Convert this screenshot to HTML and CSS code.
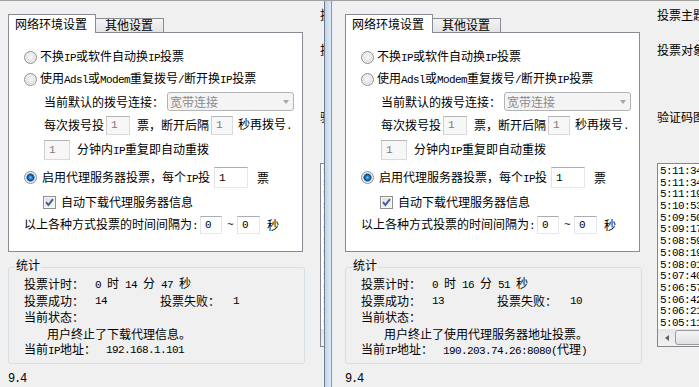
FILE: index.html
```html
<!DOCTYPE html>
<html lang="zh-CN">
<head>
<meta charset="utf-8">
<title>投票</title>
<link rel="stylesheet" href="styles.css">
</head>
<body>
<div class="screen">
  <div class="win win-left">
    <div class="app">
      <div class="main">
        <div class="tabs">
          <div class="tab active">网络环境设置</div>
          <div class="tab">其他设置</div>
        </div>
        <div class="panel">
          <div class="row r1"><span class="radio"></span><span class="rt">不换<span class="m">IP</span>或软件自动换<span class="m">IP</span>投票</span></div>
          <div class="row r2"><span class="radio"></span><span class="rt">使用<span class="m">Adsl</span>或<span class="m">Modem</span>重复拨号<span class="m">/</span>断开换<span class="m">IP</span>投票</span></div>
          <div class="row r3">当前默认的拨号连接：<span class="combo"><span class="ctext">宽带连接</span><span class="carrow"></span></span></div>
          <div class="row r4">每次拨号投<span class="in dis w24">1</span><span class="g7">票，断开后隔</span><span class="in dis w22">1</span><span class="g5">秒再拨号<span class="m">.</span></span></div>
          <div class="row r5"><span class="in dis w26 h20">1</span><span class="g7">分钟内<span class="m">IP</span>重复即自动重拨</span></div>
          <div class="row r6"><span class="radio on"></span><span class="rt3">启用代理服务器投票，每个<span class="m">IP</span>投</span><span class="in w34 h21 gi4">1</span><span class="g9">票</span></div>
          <div class="row r7"><span class="check"><svg width="11" height="11" viewBox="0 0 11 11"><path d="M2 5.2l2.4 2.8L9 2.2" fill="none" stroke="#3d5a99" stroke-width="1.9"/></svg></span><span class="g5">自动下载代理服务器信息</span></div>
          <div class="row r8"><span>以上各种方式投票的时间间隔为<span class="m">:</span></span><span class="in w22 h18 gi2">0</span><span class="m g5">~</span><span class="in w23 h18 gi4">0</span><span class="g7">秒</span></div>
        </div>
        <fieldset class="stats">
          <legend>统计</legend>
          <div class="srow"><span class="lab">投票计时：</span><span><span class="m">0 </span>时<span class="m"> 14 </span>分<span class="m"> 47 </span>秒</span></div>
          <div class="srow"><span class="lab">投票成功：</span><span class="val m">14</span><span class="lab2">投票失败：</span><span class="m">1</span></div>
          <div class="srow">当前状态：</div>
          <div class="srow indent">用户终止了下载代理信息。</div>
          <div class="srow"><span class="lab3">当前<span class="m">IP</span>地址：</span><span class="m">192.168.1.101</span></div>
        </fieldset>
        <div class="ver m">9.4</div>
      </div>
      <div class="side">
        <div class="slabel l1">投票主题</div>
        <div class="slabel l2">投票对象</div>
        <div class="slabel l3">验证码图</div>
        <div class="list">
          <div class="items">
            <div class="item">5:11:34</div>
            <div class="item">5:11:34</div>
            <div class="item">5:11:19</div>
            <div class="item">5:10:53</div>
            <div class="item">5:09:50</div>
            <div class="item">5:09:17</div>
            <div class="item">5:08:59</div>
            <div class="item">5:08:19</div>
            <div class="item">5:08:01</div>
            <div class="item">5:07:40</div>
            <div class="item">5:06:57</div>
            <div class="item">5:06:42</div>
            <div class="item">5:06:21</div>
            <div class="item">5:05:11</div>
          </div>
          <div class="hscroll"><span class="sbtn"><span class="larrow"></span></span><span class="thumb"></span></div>
        </div>
      </div>
    </div>
  </div>
  <div class="frame"></div>
  <div class="win win-right">
    <div class="app">
      <div class="main">
        <div class="tabs">
          <div class="tab active">网络环境设置</div>
          <div class="tab">其他设置</div>
        </div>
        <div class="panel">
          <div class="row r1"><span class="radio"></span><span class="rt">不换<span class="m">IP</span>或软件自动换<span class="m">IP</span>投票</span></div>
          <div class="row r2"><span class="radio"></span><span class="rt">使用<span class="m">Adsl</span>或<span class="m">Modem</span>重复拨号<span class="m">/</span>断开换<span class="m">IP</span>投票</span></div>
          <div class="row r3">当前默认的拨号连接：<span class="combo"><span class="ctext">宽带连接</span><span class="carrow"></span></span></div>
          <div class="row r4">每次拨号投<span class="in dis w24">1</span><span class="g7">票，断开后隔</span><span class="in dis w22">1</span><span class="g5">秒再拨号<span class="m">.</span></span></div>
          <div class="row r5"><span class="in dis w26 h20">1</span><span class="g7">分钟内<span class="m">IP</span>重复即自动重拨</span></div>
          <div class="row r6"><span class="radio on"></span><span class="rt3">启用代理服务器投票，每个<span class="m">IP</span>投</span><span class="in w34 h21 gi4">1</span><span class="g9">票</span></div>
          <div class="row r7"><span class="check"><svg width="11" height="11" viewBox="0 0 11 11"><path d="M2 5.2l2.4 2.8L9 2.2" fill="none" stroke="#3d5a99" stroke-width="1.9"/></svg></span><span class="g5">自动下载代理服务器信息</span></div>
          <div class="row r8"><span>以上各种方式投票的时间间隔为<span class="m">:</span></span><span class="in w22 h18 gi2">0</span><span class="m g5">~</span><span class="in w23 h18 gi4">0</span><span class="g7">秒</span></div>
        </div>
        <fieldset class="stats">
          <legend>统计</legend>
          <div class="srow"><span class="lab">投票计时：</span><span><span class="m">0 </span>时<span class="m"> 16 </span>分<span class="m"> 51 </span>秒</span></div>
          <div class="srow"><span class="lab">投票成功：</span><span class="val m">13</span><span class="lab2">投票失败：</span><span class="m">10</span></div>
          <div class="srow">当前状态：</div>
          <div class="srow indent">用户终止了使用代理服务器地址投票。</div>
          <div class="srow"><span class="lab3">当前<span class="m">IP</span>地址：</span><span><span class="m">190.203.74.26:8080(</span>代理<span class="m">)</span></span></div>
        </fieldset>
        <div class="ver m">9.4</div>
      </div>
      <div class="side">
        <div class="slabel l1">投票主题</div>
        <div class="slabel l2">投票对象</div>
        <div class="slabel l3">验证码图</div>
        <div class="list">
          <div class="items">
            <div class="item">5:11:34</div>
            <div class="item">5:11:34</div>
            <div class="item">5:11:19</div>
            <div class="item">5:10:53</div>
            <div class="item">5:09:50</div>
            <div class="item">5:09:17</div>
            <div class="item">5:08:59</div>
            <div class="item">5:08:19</div>
            <div class="item">5:08:01</div>
            <div class="item">5:07:40</div>
            <div class="item">5:06:57</div>
            <div class="item">5:06:42</div>
            <div class="item">5:06:21</div>
            <div class="item">5:05:11</div>
          </div>
          <div class="hscroll"><span class="sbtn"><span class="larrow"></span></span><span class="thumb"></span></div>
        </div>
      </div>
    </div>
  </div>
</div>
</body>
</html>
```
FILE: styles.css
```css
* { box-sizing: border-box; }
html, body { margin: 0; padding: 0; }
body {
  background: #f0f0f0;
  font-family: "Noto Sans CJK SC", "Noto Sans", sans-serif;
  font-size: 12px;
  line-height: 14px;
  color: #000;
  overflow: hidden;
}
.m {
  font-family: "Liberation Mono", "Noto Sans CJK SC", monospace;
  font-size: 11px;
  letter-spacing: -0.6px;
  white-space: pre;
}
.screen {
  display: flex;
  width: 699px;
  height: 387px;
  border-top: 1px solid #a0a0a0;
  overflow: hidden;
}
.win { height: 100%; overflow: hidden; }
.win-left { width: 324px; flex: none; }
.frame {
  width: 9px;
  flex: none;
  background: linear-gradient(to right, #6f7d8e 0, #6f7d8e 1px, #c3d5ea 1px, #dfe9f5 7px, #8d99a8 7px, #8d99a8 8px, #e9eef4 8px);
}
.win-right { flex: 1; padding-left: 4px; }
.app { display: flex; width: 520px; padding-left: 8px; }
.main { width: 297px; flex: none; }
.side { width: 200px; flex: none; margin-left: 15px; padding-top: 7px; }

/* tabs */
.tabs { display: flex; height: 19px; margin-top: 13px; margin-bottom: -1px; }
.tab {
  height: 14px;
  margin-top: 4px;
  margin-left: -1px;
  padding: 0 10px 0 9px;
  border: 1px solid #898c95;
  border-bottom: none;
  background: linear-gradient(#f3f3f3, #e4e4e4);
  line-height: 12px;
  white-space: nowrap;
}
.tab.active {
  height: 19px;
  margin: 0;
  padding: 0 8px 0 6px;
  background: #fff;
  line-height: 17px;
  position: relative;
  z-index: 1;
}
.panel {
  width: 295px;
  height: 220px;
  border: 1px solid #898c95;
  background: #fff;
  padding-top: 13px;
}
.row { display: flex; align-items: center; white-space: nowrap; }
.r1, .r2 { height: 22px; padding-left: 15px; }
.r3 { height: 23px; padding-left: 35px; }
.r4 { height: 24px; padding-left: 35px; }
.r5 { height: 26px; padding-left: 35px; }
.r6 { height: 29px; padding-left: 15px; }
.r7 { height: 20px; padding-left: 34px; }
.r8 { height: 26px; padding-left: 15px; }
.rt { margin-left: 3px; }
.rt3 { margin-left: 5px; }
.g5 { margin-left: 5px; }
.g7 { margin-left: 7px; }
.g9 { margin-left: 9px; }
.gi2 { margin-left: 2px; }
.gi4 { margin-left: 4px; }

.radio {
  width: 13px; height: 13px; flex: none;
  border-radius: 50%;
  border: 1px solid #8f8f8f;
  background: radial-gradient(circle at 50% 45%, #f7f7f7 0, #ececec 3px, #d5d5d5 5.5px);
  box-shadow: inset 0 0 0 1px #f4f4f4;
}
.radio.on {
  background: radial-gradient(circle at 50% 50%, #7fcaf8 0, #2b85cf 1.6px, #114a86 3.2px, #5f9dcf 4px, #e8eef4 4.8px, #d8d8d8 5.5px);
}
.check {
  width: 13px; height: 13px; flex: none;
  border: 1px solid #8f8f8f;
  background: linear-gradient(135deg, #dcdcdc, #fafafa);
  box-shadow: inset 0 0 0 1px #f6f6f6;
  display: flex; align-items: center; justify-content: center;
}
.check svg { display: block; }

.in {
  display: inline-flex; align-items: center; flex: none;
  height: 19px;
  padding-left: 4px;
  border: 1px solid;
  border-color: #abadb3 #e3e9ef #e3e9ef #e2e3ea;
  background: #fff;
  font-family: "Liberation Mono", monospace;
  font-size: 11px;
}
.in.dis { background: #f7f7f7; color: #7a7a7a; border-color: #b5b5b5 #dadada #dadada #cfcfcf; margin-left: 2px; }
.w22 { width: 22px; }
.w23 { width: 23px; }
.w24 { width: 24px; }
.w26 { width: 26px; }
.w34 { width: 34px; }
.h18 { height: 18px; }
.h20 { height: 20px; }
.h21 { height: 21px; }
.r5 .in.dis { margin-left: 0; }

.combo {
  display: flex; align-items: center; flex: none;
  width: 127px; height: 19px;
  margin-left: 3px;
  padding-left: 2px;
  border: 1px solid #b3b3b3;
  border-radius: 3px;
  background: #f4f4f4;
  color: #8a8a8a;
}
.ctext { flex: 1; }
.carrow {
  width: 0; height: 0;
  margin-right: 4px;
  border-left: 3.5px solid transparent;
  border-right: 3.5px solid transparent;
  border-top: 4px solid #a6a6a6;
}

/* stats */
.stats {
  width: 297px;
  margin: 6px 0 0 0;
  padding: 0 0 4px 0;
  border: 1px solid #d5dfe5;
  border-radius: 3px;
  min-width: 0;
}
.stats legend {
  margin-left: 6px;
  padding: 0 1px 4px;
  line-height: 14px;
}
.srow { height: 16.5px; display: flex; align-items: center; padding-left: 15px; white-space: nowrap; }
.srow.indent { padding-left: 38px; }
.lab { width: 71px; flex: none; }
.val { width: 65px; flex: none; }
.lab2 { width: 73px; flex: none; }
.lab3 { width: 82px; flex: none; }
.ver { display: block; margin-top: 8px; line-height: 14px; font-size: 12px; letter-spacing: -1.2px; }

/* side */
.slabel { height: 14px; white-space: nowrap; }
.l2 { margin-top: 21px; }
.l3 { margin-top: 53px; }
.list {
  margin-top: 39px;
  width: 200px;
  height: 184px;
  border: 1px solid #828790;
  background: #fff;
  display: flex; flex-direction: column;
}
.items {
  flex: 1;
  overflow: hidden;
  padding: 2px 0 0 2px;
  font-family: "Liberation Mono", monospace;
  font-size: 11px;
  letter-spacing: -0.6px;
}
.item { height: 11.7px; line-height: 11.7px; }
.hscroll {
  height: 17px; flex: none;
  display: flex;
  background: linear-gradient(#e6e6e6, #f2f2f2);
}
.sbtn { width: 17px; flex: none; display: flex; align-items: center; justify-content: center; }
.larrow {
  width: 0; height: 0;
  border-top: 3.5px solid transparent;
  border-bottom: 3.5px solid transparent;
  border-right: 4px solid #606060;
}
.thumb {
  flex: 1;
  margin: 1px 0;
  border: 1px solid #9a9a9a;
  border-radius: 3px;
  background: linear-gradient(#f5f5f5, #e0e0e0);
}
```
